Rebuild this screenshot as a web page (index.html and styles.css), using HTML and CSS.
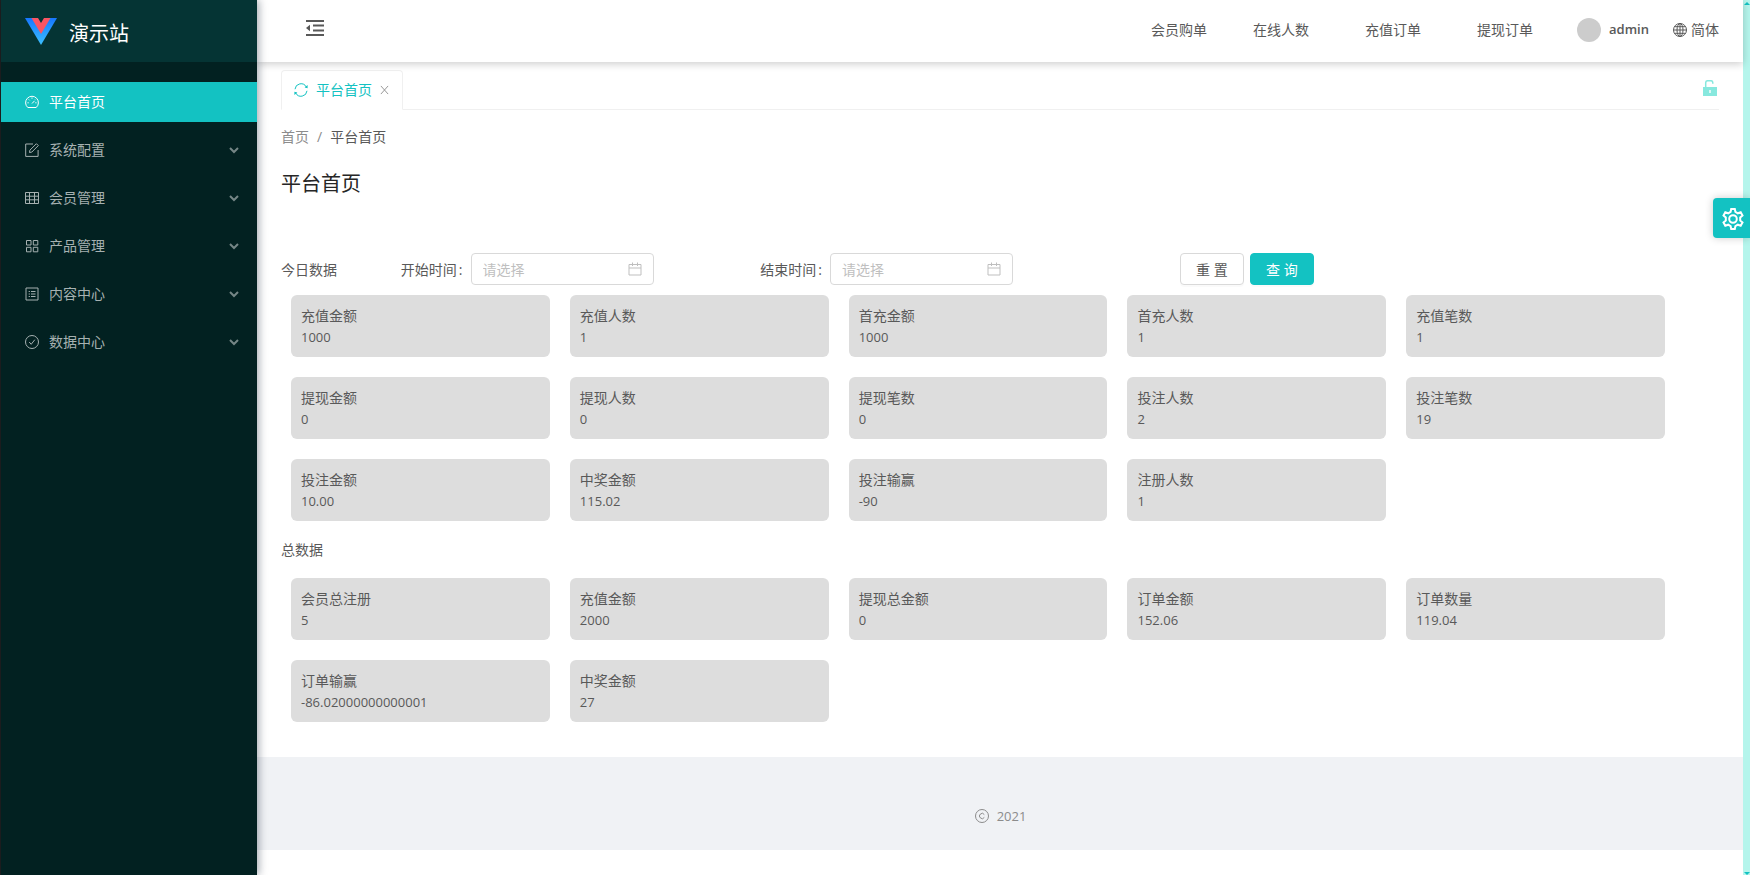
FILE: index.html
```html
<!DOCTYPE html>
<html lang="zh-CN">
<head>
  <meta charset="UTF-8" />
  <meta name="viewport" content="width=device-width, initial-scale=1.0"/>
  <title>演示站 - 平台首页</title>
  <link rel="stylesheet" href="styles.css">
</head>
<body>
  <div class="layout">
    <aside class="sidebar">
      <div class="logo">
        <svg class="logo-img" viewBox="0 0 32 27">
          <defs>
            <linearGradient id="blue" x1="0" y1="0" x2="0" y2="1">
              <stop offset="0" stop-color="#1677ff"/>
              <stop offset="1" stop-color="#3cc0ff"/>
            </linearGradient>
          </defs>
          <path fill="url(#blue)" d="M0 0h32L16 27z"/>
          <path fill="#fa5563" d="M6.500 0h19L16 16z"/>
          <path fill="#053434" d="M13 0h6l-3 5z"/>
        </svg>
        <span>演示站</span>
      </div>
      <ul class="menu">
        <li>
          <a href="#" class="menu-item active">
            <svg class="icon" viewBox="0 0 16 16"><path d="M3.800 13.500A6.400 6.400 0 1 1 12.200 13.500z"/><path d="M8 9.500l2.600-2.700M8 3.500v1.200M3.500 8.800h1.200M11.300 8.800h1.200M4.800 5.500l.8.8M11.200 5.400l-.4.4"/></svg>
            <span>平台首页</span>
          </a>
        </li>
        <li>
          <a href="#" class="menu-item">
            <svg class="icon" viewBox="0 0 16 16"><path d="M9 2H1.700v12.400h12.400V8"/><path d="M5.500 10.500l.4-2.300 6.500-6.500 1.900 1.900-6.500 6.500z"/></svg>
            <span>系统配置</span>
            <svg class="arrow" viewBox="0 0 10 8"><path d="M1 2l4 4 4-4"/></svg>
          </a>
        </li>
        <li>
          <a href="#" class="menu-item">
            <svg class="icon" viewBox="0 0 16 16"><path d="M1.500 2.500h13v11h-13zM1.500 6.200h13M1.500 9.800h13M5.500 2.500v11M10.500 2.500v11"/></svg>
            <span>会员管理</span>
            <svg class="arrow" viewBox="0 0 10 8"><path d="M1 2l4 4 4-4"/></svg>
          </a>
        </li>
        <li>
          <a href="#" class="menu-item">
            <svg class="icon" viewBox="0 0 16 16"><path d="M2.500 2.500H7V7H2.500zM9.300 2.500h4.500V7H9.300zM2.500 9.300H7v4.500H2.500zM9.300 9.300h4.500v4.500H9.300z"/></svg>
            <span>产品管理</span>
            <svg class="arrow" viewBox="0 0 10 8"><path d="M1 2l4 4 4-4"/></svg>
          </a>
        </li>
        <li>
          <a href="#" class="menu-item">
            <svg class="icon" viewBox="0 0 16 16"><path d="M2 2h12v12H2z"/><path d="M7 5.500h4.500M7 8h4.500M7 10.500h4.500M4.700 5.500h1.200M4.700 8h1.200M4.700 10.500h1.200"/></svg>
            <span>内容中心</span>
            <svg class="arrow" viewBox="0 0 10 8"><path d="M1 2l4 4 4-4"/></svg>
          </a>
        </li>
        <li>
          <a href="#" class="menu-item">
            <svg class="icon" viewBox="0 0 16 16"><circle cx="8" cy="8" r="6.500"/><path d="M5.200 8l2 2.300 3.600-4.600"/></svg>
            <span>数据中心</span>
            <svg class="arrow" viewBox="0 0 10 8"><path d="M1 2l4 4 4-4"/></svg>
          </a>
        </li>
      </ul>
    </aside>

    <div class="main">
      <header class="header">
        <button class="fold" aria-label="fold menu">
          <svg viewBox="0 0 18 16"><path d="M0 1h18M7 5.600h11M7 10.400h11M0 15h18"/><path class="fill" d="M0 8l4-3.200v6.400z"/></svg>
        </button>
        <nav class="header-nav">
          <a href="#" class="buy">会员购单</a>
          <a href="#">在线人数</a>
          <a href="#">充值订单</a>
          <a href="#">提现订单</a>
        </nav>
        <a href="#" class="user"><span class="avatar"></span>admin</a>
        <a href="#" class="lang">
          <svg class="icon" viewBox="0 0 16 16"><circle cx="8" cy="8" r="6.500"/><ellipse cx="8" cy="8" rx="3" ry="6.500"/><path d="M8 1.500v13M1.500 8h13M2.500 4.700h11M2.500 11.300h11"/></svg>
          简体
        </a>
      </header>

      <div class="content">
        <div class="tabs">
          <div class="tab">
            <svg class="icon" viewBox="0 0 16 16"><path d="M2 7.200A6 6 0 0 1 13.300 5M14 8.800A6 6 0 0 1 2.700 11"/><path class="fill" d="M14.600 3v3.200l-3-.8zM1.400 13V9.800l3 .8z"/></svg>
            <span>平台首页</span>
            <button class="close" aria-label="close tab">
              <svg viewBox="0 0 10 10"><path d="M1 .500l8 9M9 .500l-8 9"/></svg>
            </button>
          </div>
          <button class="lock" aria-label="lock tab">
            <svg viewBox="0 0 14 16"><path d="M0 7h14v9H0z"/><path class="line" d="M2.700 7V2.800Q2.700.700 4.800.700h3Q9.800.700 9.800 2.800v1"/><path class="hole" d="M6.300 10h1.400v3H6.300z"/></svg>
          </button>
        </div>

        <div class="breadcrumb">
          <a href="#">首页</a><span class="slash">/</span><span class="current">平台首页</span>
        </div>
        <h1>平台首页</h1>

        <form class="search">
          <div class="title">今日数据</div>
          <div class="field">
            <label for="startTime">开始时间<span class="colon">:</span></label>
            <div class="picker">
              <input type="text" id="startTime" placeholder="请选择">
              <svg viewBox="0 0 14 14"><path d="M1 2.500h12v10.500H1zM1 6h12M4.500 .500v3.500M9.500 .500v3.500"/></svg>
            </div>
          </div>
          <div class="field">
            <label for="endTime">结束时间<span class="colon">:</span></label>
            <div class="picker">
              <input type="text" id="endTime" placeholder="请选择">
              <svg viewBox="0 0 14 14"><path d="M1 2.500h12v10.500H1zM1 6h12M4.500 .500v3.500M9.500 .500v3.500"/></svg>
            </div>
          </div>
          <div class="buttons">
            <button type="reset" class="btn">重 置</button>
            <button type="button" class="btn primary">查 询</button>
          </div>
        </form>

        <div class="cards">
          <div class="card"><div>充值金额</div><div class="num">1000</div></div>
          <div class="card"><div>充值人数</div><div class="num">1</div></div>
          <div class="card"><div>首充金额</div><div class="num">1000</div></div>
          <div class="card"><div>首充人数</div><div class="num">1</div></div>
          <div class="card"><div>充值笔数</div><div class="num">1</div></div>
          <div class="card"><div>提现金额</div><div class="num">0</div></div>
          <div class="card"><div>提现人数</div><div class="num">0</div></div>
          <div class="card"><div>提现笔数</div><div class="num">0</div></div>
          <div class="card"><div>投注人数</div><div class="num">2</div></div>
          <div class="card"><div>投注笔数</div><div class="num">19</div></div>
          <div class="card"><div>投注金额</div><div class="num">10.00</div></div>
          <div class="card"><div>中奖金额</div><div class="num">115.02</div></div>
          <div class="card"><div>投注输赢</div><div class="num">-90</div></div>
          <div class="card"><div>注册人数</div><div class="num">1</div></div>
        </div>

        <div class="total-title">总数据</div>
        <div class="cards">
          <div class="card"><div>会员总注册</div><div class="num">5</div></div>
          <div class="card"><div>充值金额</div><div class="num">2000</div></div>
          <div class="card"><div>提现总金额</div><div class="num">0</div></div>
          <div class="card"><div>订单金额</div><div class="num">152.06</div></div>
          <div class="card"><div>订单数量</div><div class="num">119.04</div></div>
          <div class="card"><div>订单输赢</div><div class="num">-86.02000000000001</div></div>
          <div class="card"><div>中奖金额</div><div class="num">27</div></div>
        </div>
      </div>

      <footer class="footer">
        <svg class="icon" viewBox="0 0 16 16"><circle cx="8" cy="8" r="6.500"/><path d="M10.300 6.600a2.600 2.600 0 1 0 0 2.800"/></svg>
        <span class="num">2021</span>
      </footer>
    </div>

    <div class="scrollbar">
      <svg viewBox="0 0 6 3"><path d="M3 0l3 3H0z"/></svg>
      <svg viewBox="0 0 6 3"><path d="M0 0h6L3 3z"/></svg>
    </div>
  </div>

  <button class="setting" aria-label="settings">
    <svg viewBox="0 0 24 24"><path d="M9.600 4.900L10.200 2h3.600l.6 2.900 2.400 1.400 2.900-1 1.800 3.200-2.300 2v3l2.300 2-1.800 3.200-2.900-1-2.400 1.400-.6 2.900h-3.600l-.6-2.900-2.400-1.400-2.900 1-1.800-3.200 2.300-2v-3l-2.300-2 1.800-3.200 2.900 1z"/><circle cx="12" cy="12" r="3.800"/></svg>
  </button>
</body>
</html>
```

FILE: styles.css
```css
* {
  box-sizing: border-box;
}

body {
  margin: 0;
  font-family: "Open Sans", "Noto Sans CJK SC", sans-serif;
  font-size: 14px;
  line-height: 21px;
  color: #595959;
  background: #fff;
}

a {
  color: inherit;
  text-decoration: none;
}

button {
  padding: 0;
  border: none;
  background: none;
  font-family: inherit;
  font-size: 14px;
  color: inherit;
  cursor: pointer;
}

svg {
  display: block;
  flex: none;
  fill: none;
  stroke: currentColor;
}

svg .fill {
  fill: currentColor;
  stroke: none;
}

.icon {
  width: 16px;
  height: 16px;
}

.num {
  font-size: 13px;
  line-height: 22px;
}

.layout {
  display: flex;
  min-height: 100vh;
  border-left: 1px solid #1f1f1f;
}

/* sidebar */
.sidebar {
  position: relative;
  z-index: 2;
  flex: none;
  width: 256px;
  background: #022121;
  box-shadow: 2px 0 8px rgba(0, 21, 41, 0.35);
}

.logo {
  display: flex;
  align-items: center;
  gap: 12px;
  height: 62px;
  padding-left: 24px;
  background: #053434;
  color: #fff;
  font-size: 20px;
}

.logo span {
  padding-top: 4px;
}

.logo-img {
  width: 32px;
  height: 27px;
  stroke: none;
}

.menu {
  display: flex;
  flex-direction: column;
  gap: 8px;
  margin: 0;
  padding: 20px 0;
  list-style: none;
}

.menu-item {
  display: flex;
  align-items: center;
  gap: 9px;
  height: 40px;
  padding: 0 18px 0 23px;
  color: #a6b1b1;
}

.menu-item span {
  padding-bottom: 2px;
}

.menu-item.active {
  background: #13c2c2;
  color: #fff;
}

.arrow {
  width: 10px;
  height: 8px;
  margin-left: auto;
  stroke-width: 2;
  opacity: 0.7;
}

/* header */
.main {
  flex: 1;
  min-width: 0;
}

.header {
  position: relative;
  z-index: 1;
  display: flex;
  align-items: center;
  height: 62px;
  padding: 0 24px 3px 49px;
  background: #fff;
  box-shadow: 0 2px 8px rgba(0, 0, 0, 0.2);
}

.fold {
  margin-right: auto;
  padding-bottom: 3px;
}

.fold svg {
  width: 18px;
  height: 16px;
  stroke-width: 2;
}

.header-nav {
  display: flex;
  gap: 56px;
  margin-right: 44px;
}

.header-nav .buy {
  margin-right: -10px;
}

.user {
  display: flex;
  align-items: center;
  gap: 8px;
  margin-right: 23px;
  font-weight: 600;
  font-size: 13px;
}

.avatar {
  width: 24px;
  height: 24px;
  border-radius: 50%;
  background: #ccc;
}

.lang {
  display: flex;
  align-items: center;
  gap: 3px;
}

/* content */
.content {
  padding: 8px 24px 25px;
}

.tabs {
  display: flex;
  align-items: center;
  justify-content: space-between;
  height: 40px;
  border-bottom: 1px solid #f0f0f0;
}

.tab {
  display: flex;
  align-items: center;
  height: 40px;
  padding: 0 13px 0 11px;
  border: 1px solid #f0f0f0;
  border-bottom-color: #fff;
  border-radius: 4px 4px 0 0;
  color: #13c2c2;
}

.tab .icon {
  margin-right: 7px;
}

.close {
  margin-left: 8px;
  color: #8c8c8c;
}

.close svg {
  width: 9px;
  height: 10px;
}

.lock {
  margin-right: 2px;
  padding-bottom: 4px;
  color: #87e8de;
}

.lock svg {
  width: 14px;
  height: 16px;
  fill: currentColor;
  stroke: none;
}

.lock .line {
  fill: none;
  stroke: currentColor;
  stroke-width: 1.5;
}

.lock .hole {
  fill: #fff;
}

.breadcrumb {
  margin-top: 16px;
  color: #8c8c8c;
}

.breadcrumb .slash {
  margin: 0 8px;
}

.breadcrumb .current {
  color: #595959;
}

h1 {
  margin: 21px 0 0;
  font-size: 20px;
  font-weight: 400;
  line-height: 32px;
  color: #262626;
}

.search {
  display: grid;
  grid-template-columns: repeat(12, 1fr);
  align-items: center;
  margin-top: 53px;
}

.field {
  grid-column: span 3;
  display: flex;
  align-items: center;
}

.field label {
  white-space: nowrap;
}

.colon {
  margin: 0 8px 0 2px;
}

.picker {
  position: relative;
}

.picker input {
  width: 183px;
  height: 32px;
  padding: 0 32px 0 11px;
  border: 1px solid #d9d9d9;
  border-radius: 4px;
  font-family: inherit;
  font-size: 14px;
  color: inherit;
}

.picker input::placeholder {
  color: #bfbfbf;
}

.picker svg {
  position: absolute;
  top: 9px;
  right: 12px;
  width: 14px;
  height: 14px;
  color: #bfbfbf;
}

.buttons {
  grid-column: span 5;
  display: flex;
  gap: 6px;
  padding-left: 60px;
}

.btn {
  width: 64px;
  height: 32px;
  border: 1px solid #d9d9d9;
  border-radius: 4px;
  background: #fff;
  box-shadow: 0 2px 0 rgba(0, 0, 0, 0.02);
}

.btn.primary {
  border-color: #13c2c2;
  background: #13c2c2;
  color: #fff;
}

.cards {
  display: flex;
  flex-wrap: wrap;
}

.card {
  width: 18%;
  margin: 10px;
  padding: 10px 10px 9px;
  border-radius: 6px;
  background: #ddd;
}

.total-title {
  padding: 8px 0;
}

/* footer */
.footer {
  display: flex;
  justify-content: center;
  align-items: center;
  gap: 7px;
  padding: 48px 0 23px;
  background: #f0f2f5;
  color: #8c8c8c;
}

.scrollbar {
  display: flex;
  flex-direction: column;
  align-items: flex-end;
  justify-content: space-between;
  flex: none;
  width: 7px;
  padding: 2px 0 0;
  background: #b5f5ec;
}

.scrollbar svg {
  width: 6px;
  height: 3px;
  fill: #13c2c2;
  stroke: none;
}

.setting {
  position: fixed;
  top: 198px;
  right: 0;
  z-index: 3;
  width: 37px;
  height: 40px;
  padding: 2px 0 0 8px;
  border-radius: 4px 0 0 4px;
  background: #13c2c2;
  color: #fff;
  box-shadow: 0 0 8px rgba(0, 0, 0, 0.2);
}

.setting svg {
  width: 24px;
  height: 24px;
  stroke-width: 2;
}
```
